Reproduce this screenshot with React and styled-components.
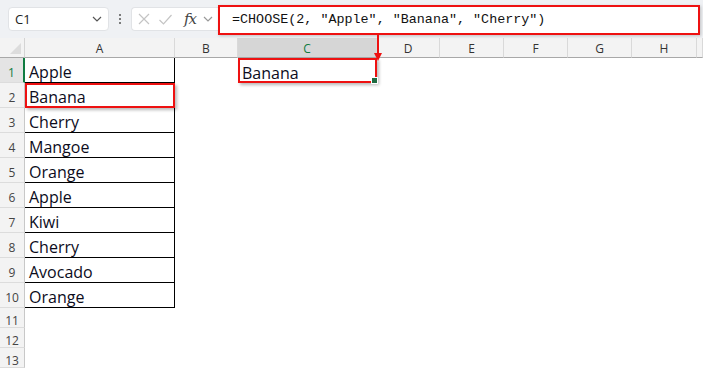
import React from "react";
import styled, { createGlobalStyle } from "styled-components";

const Global = createGlobalStyle`
  html, body { margin: 0; padding: 0; background: #ffffff; }
  body { width: 703px; height: 370px; overflow: hidden; font-family: "Open Sans", "Noto Sans", sans-serif; }
`;

const Page = styled.div`
  position: relative;
  width: 703px;
  height: 370px;
  display: flex;
  flex-direction: column;
  background: #fff;
`;

const Toolbar = styled.div`
  height: 38px;
  background: #eff1f4;
  display: flex;
  align-items: center;
  padding: 0 3px 0 8px;
  box-sizing: border-box;
`;

const NameBox = styled.div`
  width: 101px;
  height: 24px;
  box-sizing: border-box;
  background: #fff;
  border: 1px solid #e1e3e6;
  border-radius: 4px;
  display: flex;
  align-items: center;
  justify-content: space-between;
  padding: 0 6px;
  font-size: 13px;
  color: #222;
`;

const Dots = styled.div`
  width: 22px;
  display: flex;
  flex-direction: column;
  align-items: center;
  gap: 2px;
  span { width: 2px; height: 2px; background: #555; border-radius: 1px; }
`;

const FxBox = styled.div`
  width: 90px;
  height: 24px;
  box-sizing: border-box;
  background: #fff;
  border: 1px solid #e1e3e6;
  border-radius: 4px 0 0 4px;
  border-right: none;
  display: flex;
  align-items: center;
  padding-left: 5px;
  gap: 7px;
`;

const Fx = styled.span`
  font-family: "DejaVu Serif", "Liberation Serif", serif;
  font-style: italic;
  font-size: 15px;
  color: #444;
  margin-left: 4px;
  letter-spacing: -1px;
`;

const FormulaBar = styled.div`
  flex: 1;
  height: 30px;
  box-sizing: border-box;
  background: #fff;
  border: 2px solid #ee1111;
  display: flex;
  align-items: center;
  padding-left: 12px;
  font-family: "Liberation Mono", monospace;
  font-size: 13.4px;
  color: #111;
  margin-left: -3px;
  margin-top: 1px;
  box-shadow: 1px 1px 3px rgba(0,0,0,0.2);
  position: relative;
  z-index: 2;
`;

const Sheet = styled.div`
  display: flex;
  flex-direction: column;
`;

const Row = styled.div`
  display: flex;
  height: ${p => p.$h}px;
`;

const Corner = styled.div`
  width: 25px;
  box-sizing: border-box;
  background: #f3f3f3;
  border-right: 1px solid #d4d4d4;
  border-bottom: 1px solid #a8a8a8;
  position: relative;
  overflow: hidden;
  &::after {
    content: "";
    position: absolute;
    right: 3px;
    bottom: 3px;
    width: 0;
    height: 0;
    border-left: 11px solid transparent;
    border-bottom: 11px solid #dcdcdc;
  }
`;

const ColHead = styled.div`
  width: ${p => p.$w}px;
  flex: ${p => (p.$grow ? 1 : "none")};
  box-sizing: border-box;
  background: ${p => (p.$active ? "#d6d6d6" : "#f3f3f3")};
  color: ${p => (p.$active ? "#107c41" : "#333")};
  border-right: 1px solid #d9d9d9;
  border-bottom: 1px solid #a8a8a8;
  font-size: 12px;
  display: flex;
  align-items: center;
  justify-content: center;
  padding-top: 1px;
`;

const RowHead = styled.div`
  width: 25px;
  flex: none;
  box-sizing: border-box;
  background: ${p => (p.$active ? "#e4e4e4" : "#f3f3f3")};
  color: ${p => (p.$active ? "#107c41" : "#444")};
  border-right: ${p => (p.$active ? "2px solid #107c41" : "1px solid #c8c8c8")};
  border-bottom: 1px solid #dcdcdc;
  font-size: 12px;
  display: flex;
  align-items: center;
  justify-content: center;
  padding-top: 5px;
`;

const Cell = styled.div`
  width: ${p => p.$w}px;
  flex: ${p => (p.$grow ? 1 : "none")};
  box-sizing: border-box;
  background: #fff;
  border-right: ${p => (p.$boxed ? "1px solid #000" : "none")};
  border-bottom: ${p => (p.$boxed ? "1px solid #000" : "none")};
  font-size: 16px;
  line-height: 18px;
  color: #0c0c1c;
  display: flex;
  align-items: flex-end;
  padding: 0 0 1px 4px;
  white-space: nowrap;
  position: relative;
  ${p =>
    p.$mark &&
    `
    outline: 2px solid #ee1111;
    outline-offset: -2px;
    box-shadow: 2px 2px 3px rgba(0,0,0,0.28);
    z-index: 1;
  `}
`;

const FillHandle = styled.span`
  position: absolute;
  right: -1px;
  bottom: -1px;
  width: 5px;
  height: 5px;
  background: #1f6b42;
  border: 1px solid #fff;
  z-index: 3;
`;

const Arrow = styled.svg`
  position: absolute;
  left: 372px;
  top: 34px;
  z-index: 4;
`;

const widths = [150, 63, 139, 63, 64, 64, 64, 65];
const letters = ["A", "B", "C", "D", "E", "F", "G", "H"];
const fruits = ["Apple", "Banana", "Cherry", "Mangoe", "Orange", "Apple", "Kiwi", "Cherry", "Avocado", "Orange"];

function Chevron({ color = "#555" }) {
  return (
    <svg width="10" height="6" viewBox="0 0 10 6">
      <path d="M1 1 L5 5 L9 1" fill="none" stroke={color} strokeWidth="1.2" />
    </svg>
  );
}

export default function App() {
  const rows = [];
  for (let r = 1; r <= 13; r++) {
    const h = r <= 10 ? 25 : 20;
    rows.push(
      <Row key={r} $h={h}>
        <RowHead $active={r === 1}>{r}</RowHead>
        {widths.map((w, i) => {
          const boxed = i === 0 && r <= 10;
          const text = i === 0 && r <= 10 ? fruits[r - 1] : i === 2 && r === 1 ? "Banana" : "";
          const mark = (i === 0 && r === 2) || (i === 2 && r === 1);
          return (
            <Cell key={i} $w={w} $boxed={boxed} $mark={mark}>
              {text}
              {i === 2 && r === 1 && <FillHandle />}
            </Cell>
          );
        })}
        <Cell $grow />
      </Row>
    );
  }

  return (
    <Page>
      <Global />
      <Toolbar>
        <NameBox>
          <span>C1</span>
          <Chevron />
        </NameBox>
        <Dots>
          <span />
          <span />
          <span />
        </Dots>
        <FxBox>
          <svg width="14" height="14" viewBox="0 0 14 14">
            <path d="M2 2 L12 12 M12 2 L2 12" stroke="#c4c4c4" strokeWidth="1.2" fill="none" />
          </svg>
          <svg width="15" height="13" viewBox="0 0 15 13">
            <path d="M1.5 7 L5.5 11 L13.5 2" stroke="#c4c4c4" strokeWidth="1.2" fill="none" />
          </svg>
          <Fx>fx</Fx>
          <Chevron color="#999" />
        </FxBox>
        <FormulaBar>=CHOOSE(2, "Apple", "Banana", "Cherry")</FormulaBar>
      </Toolbar>
      <Sheet>
        <Row $h={20}>
          <Corner />
          {widths.map((w, i) => (
            <ColHead key={i} $w={w} $active={i === 2}>
              {letters[i]}
            </ColHead>
          ))}
          <ColHead $grow />
        </Row>
        {rows}
      </Sheet>
      <Arrow width="12" height="28" viewBox="0 0 12 28">
        <path d="M6 0 L6 22" stroke="#ee1111" strokeWidth="2" />
        <path d="M2 19 L10 19 L6 27 Z" fill="#ee1111" />
      </Arrow>
    </Page>
  );
}
